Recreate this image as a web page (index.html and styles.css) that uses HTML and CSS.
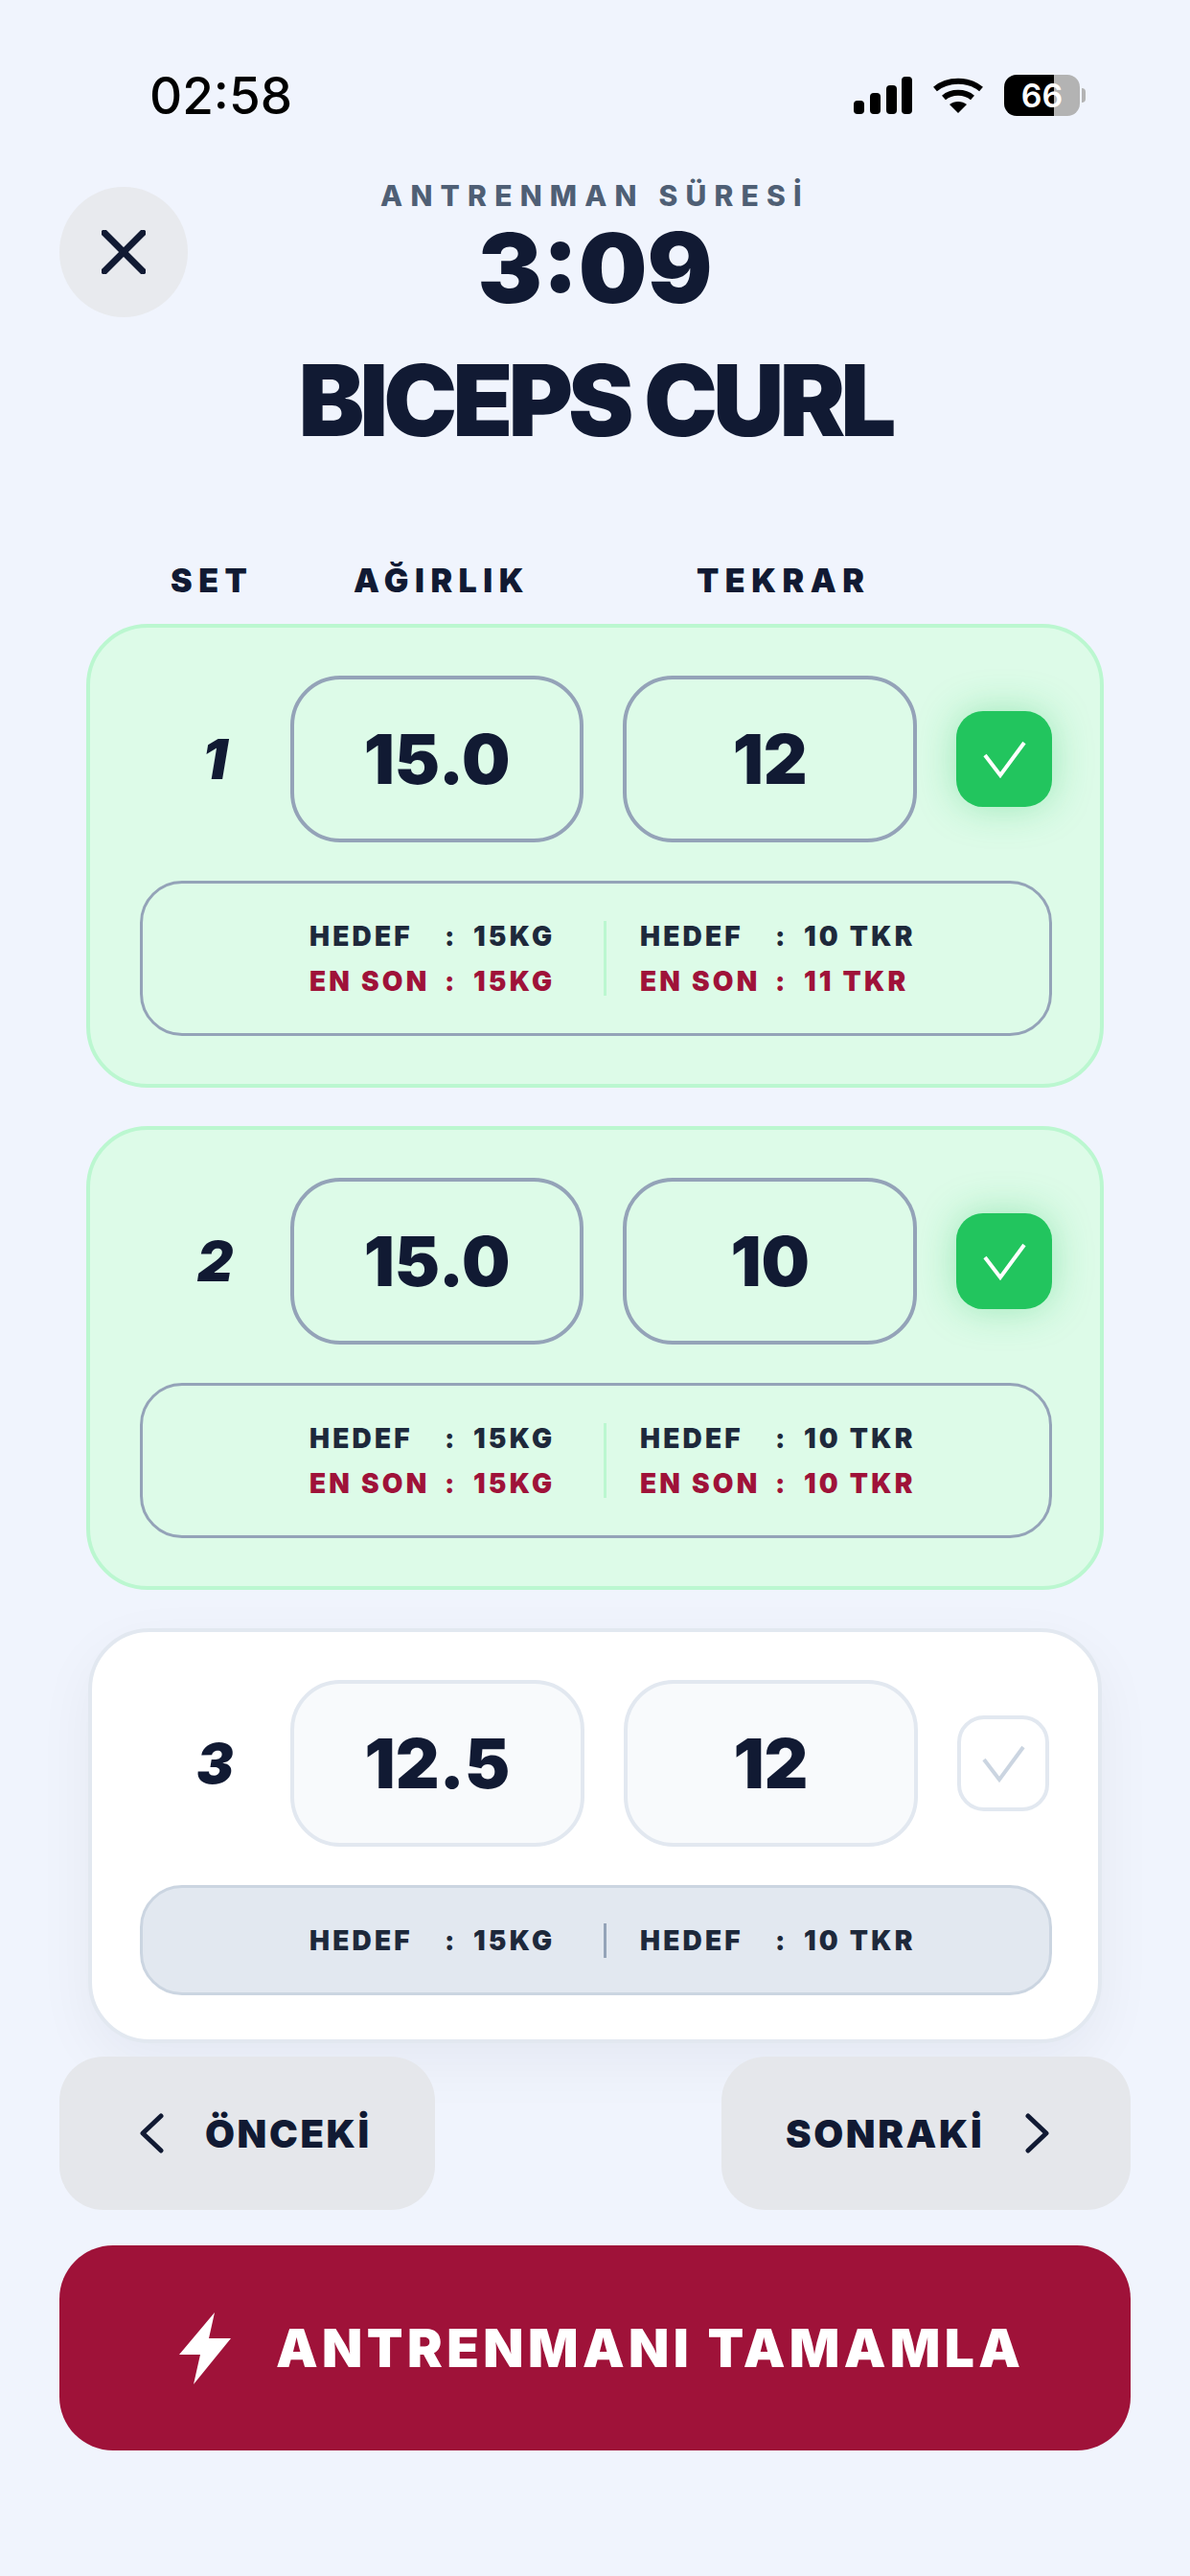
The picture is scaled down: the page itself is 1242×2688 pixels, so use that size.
FILE: index.html

```html
<!DOCTYPE html>
<html lang="tr">
<head>
    <meta charset="UTF-8">
    <meta name="viewport" content="width=device-width, initial-scale=1.0">
    <title>Biceps Curl</title>
    <link rel="stylesheet" href="styles.css">
</head>
<body>
    <div class="screen">
        <div class="status-bar">
            <span class="clock">02:58</span>
            <div class="status-icons">
                <svg class="signal" width="61" height="39" viewBox="0 0 61 39" fill="#000">
                    <rect x="0" y="25" width="11" height="14" rx="4"/>
                    <rect x="17" y="17" width="11" height="22" rx="4"/>
                    <rect x="34" y="9" width="11" height="30" rx="4"/>
                    <rect x="50" y="0" width="11" height="39" rx="4"/>
                </svg>
                <svg class="wifi" width="52" height="38" viewBox="0 0 52 38" fill="none" stroke="#000" stroke-width="6">
                    <path d="M2 12 C15 1 37 1 50 12"/>
                    <path d="M11 21 C19 14 33 14 41 21"/>
                    <path d="M17 28 L26 37 L35 28 C30 24 22 24 17 28 Z" fill="#000" stroke="none"/>
                </svg>
                <div class="battery">66</div>
            </div>
        </div>

        <div class="timer-row">
            <button class="close-btn">
                <svg width="46" height="46" viewBox="0 0 46 46" fill="none" stroke="#111a33" stroke-width="7" stroke-linecap="round">
                    <path d="M3 3 L43 43"/>
                    <path d="M43 3 L3 43"/>
                </svg>
            </button>
            <div class="timer">
                <div class="timer-label">ANTRENMAN SÜRESİ</div>
                <div class="timer-value">3:09</div>
            </div>
        </div>

        <h1 class="exercise">BICEPS CURL</h1>

        <div class="columns">
            <span class="col-set">SET</span>
            <span class="col-weight">AĞIRLIK</span>
            <span class="col-reps">TEKRAR</span>
        </div>

        <div class="set-list">
            <div class="set-card done">
                <div class="set-row">
                    <span class="set-no">1</span>
                    <div class="value-box">15.0</div>
                    <div class="value-box">12</div>
                    <div class="check">
                        <svg width="100" height="100" viewBox="0 0 100 100" fill="none" stroke="#fff" stroke-width="4"><path d="M30 46 L46 67 L71 33"/></svg>
                    </div>
                </div>
                <div class="info-box">
                    <div class="info-group">
                        <span>HEDEF</span><span>:</span><span>15KG</span>
                        <span class="last">EN SON</span><span class="last">:</span><span class="last">15KG</span>
                    </div>
                    <div class="info-divider"></div>
                    <div class="info-group">
                        <span>HEDEF</span><span>:</span><span>10 TKR</span>
                        <span class="last">EN SON</span><span class="last">:</span><span class="last">11 TKR</span>
                    </div>
                </div>
            </div>

            <div class="set-card done">
                <div class="set-row">
                    <span class="set-no">2</span>
                    <div class="value-box">15.0</div>
                    <div class="value-box">10</div>
                    <div class="check">
                        <svg width="100" height="100" viewBox="0 0 100 100" fill="none" stroke="#fff" stroke-width="4"><path d="M30 46 L46 67 L71 33"/></svg>
                    </div>
                </div>
                <div class="info-box">
                    <div class="info-group">
                        <span>HEDEF</span><span>:</span><span>15KG</span>
                        <span class="last">EN SON</span><span class="last">:</span><span class="last">15KG</span>
                    </div>
                    <div class="info-divider"></div>
                    <div class="info-group">
                        <span>HEDEF</span><span>:</span><span>10 TKR</span>
                        <span class="last">EN SON</span><span class="last">:</span><span class="last">10 TKR</span>
                    </div>
                </div>
            </div>

            <div class="set-card pending">
                <div class="set-row">
                    <span class="set-no">3</span>
                    <div class="value-box">12.5</div>
                    <div class="value-box">12</div>
                    <div class="check">
                        <svg width="96" height="96" viewBox="0 0 96 96" fill="none" stroke="#cbd5e1" stroke-width="4"><path d="M28 44 L44 65 L69 31"/></svg>
                    </div>
                </div>
                <div class="info-box">
                    <div class="info-group">
                        <span>HEDEF</span><span>:</span><span>15KG</span>
                    </div>
                    <div class="info-divider"></div>
                    <div class="info-group">
                        <span>HEDEF</span><span>:</span><span>10 TKR</span>
                    </div>
                </div>
            </div>
        </div>

        <div class="nav-row">
            <button class="nav-btn prev">
                <svg width="26" height="42" viewBox="0 0 26 42" fill="none" stroke="#111a33" stroke-width="5" stroke-linecap="round" stroke-linejoin="round"><path d="M23 3 L4 21 L23 39"/></svg>
                ÖNCEKİ
            </button>
            <button class="nav-btn next">
                SONRAKİ
                <svg width="26" height="42" viewBox="0 0 26 42" fill="none" stroke="#111a33" stroke-width="5" stroke-linecap="round" stroke-linejoin="round"><path d="M3 3 L22 21 L3 39"/></svg>
            </button>
        </div>

        <button class="finish-btn">
            <svg width="54" height="75" viewBox="0 0 54 75" fill="#fff"><path d="M37 0 L0 44 L22 44 L15 75 L54 27 L31 27 Z"/></svg>
            ANTRENMANI TAMAMLA
        </button>
    </div>
</body>
</html>
```

FILE: styles.css

```css
body {
    margin: 0;
    background-color: #f0f4fd;
    font-family: Inter, "Liberation Sans", sans-serif;
    color: #111a33;
}
button {
    font-family: inherit;
    border: none;
    color: inherit;
    padding: 0;
}
.screen {
    width: 1242px;
    height: 2688px;
    box-sizing: border-box;
    padding: 0 62px;
}

/* status bar */
.status-bar {
    height: 195px;
    box-sizing: border-box;
    padding: 70px 0 0 94px;
    display: flex;
    justify-content: space-between;
    align-items: flex-start;
}
.clock {
    font-size: 53px;
    font-weight: 500;
    line-height: 60px;
    color: #000;
}
.status-icons {
    display: flex;
    align-items: center;
    gap: 22px;
    padding: 8px 53px 0 0;
}
.battery {
    width: 79px;
    height: 43px;
    border-radius: 13px;
    background: linear-gradient(90deg, #000 66%, #b3b3b3 66%);
    color: #fff;
    font-size: 34px;
    font-weight: 600;
    line-height: 43px;
    text-align: center;
    position: relative;
}
.battery::after {
    content: "";
    position: absolute;
    left: 81px;
    top: 14px;
    width: 4px;
    height: 15px;
    border-radius: 0 4px 4px 0;
    background: #b3b3b3;
}

/* header */
.timer-row {
    display: grid;
    grid-template-columns: 134px 1fr 134px;
    height: 136px;
}
.close-btn {
    width: 134px;
    height: 136px;
    border-radius: 50%;
    background: #e8eaee;
    display: flex;
    align-items: center;
    justify-content: center;
}
.timer {
    text-align: center;
    margin-top: -8px;
}
.timer-label {
    font-size: 30px;
    font-weight: 800;
    letter-spacing: 8.2px;
    line-height: 34px;
    color: #4f5f75;
}
.timer-value {
    font-size: 101px;
    font-weight: 900;
    line-height: 102px;
    margin-top: 7px;
}
.exercise {
    margin: 28px 0 0;
    font-size: 103px;
    font-weight: 900;
    line-height: 118px;
    letter-spacing: -5px;
    text-align: center;
}
.columns {
    margin-top: 103px;
    height: 50px;
    display: flex;
    align-items: center;
    font-size: 34px;
    font-weight: 900;
    letter-spacing: 6.5px;
}
.col-set {
    width: 307px;
    padding-left: 116px;
    box-sizing: border-box;
}
.col-weight {
    width: 358px;
}
.col-reps {
    width: 200px;
}

/* set cards */
.set-list {
    margin-top: 21px;
    display: flex;
    flex-direction: column;
    gap: 40px;
}
.set-card {
    margin: 0 28px;
    box-sizing: border-box;
    border-radius: 64px;
    border: 4px solid #bbf7d0;
    padding: 50px 50px 50px 52px;
    background: #ddfbe8;
}
.set-row {
    display: flex;
    align-items: center;
}
.set-no {
    width: 157px;
    text-align: center;
    font-size: 58px;
    font-weight: 900;
    font-style: italic;
}
.value-box {
    width: 307px;
    height: 174px;
    box-sizing: border-box;
    border-radius: 52px;
    border: 4px solid #94a3b8;
    display: flex;
    align-items: center;
    justify-content: center;
    font-size: 71px;
    font-weight: 900;
    margin-right: 41px;
}
.check {
    width: 100px;
    height: 100px;
    box-sizing: border-box;
    border-radius: 28px;
    background: #22c55e;
    box-shadow: 0 0 40px rgba(34, 197, 94, 0.35);
    display: flex;
    align-items: center;
    justify-content: center;
}
.info-box {
    margin-top: 40px;
    height: 162px;
    box-sizing: border-box;
    border-radius: 44px;
    border: 3px solid #94a3b8;
    padding-left: 174px;
    display: flex;
    align-items: center;
}
.info-group {
    display: grid;
    grid-template-columns: 141px 30px auto;
    row-gap: 13px;
    font-size: 28px;
    font-weight: 900;
    line-height: 34px;
    letter-spacing: 3.2px;
    color: #1e293b;
}
.info-group:first-child {
    width: 307px;
}
.last {
    color: #9f1239;
}
.info-divider {
    width: 3px;
    height: 78px;
    background: #bbf7d0;
    margin-right: 35px;
}

/* set still to do */
.pending {
    margin: 0 30px;
    padding: 50px 48px 46px 50px;
    border-color: #e2e8f0;
    background: #fff;
    box-shadow: 0 20px 60px rgba(15, 23, 42, 0.05);
}
.pending .value-box {
    border-color: #e2e8f0;
    background: #f8fafc;
}
.pending .check {
    width: 96px;
    height: 100px;
    border: 4px solid #e2e8f0;
    background: #fff;
    box-shadow: none;
}
.pending .check svg {
    flex-shrink: 0;
}
.pending .info-box {
    height: 115px;
    background: #e2e8f0;
    border-color: #cbd5e1;
}
.pending .info-divider {
    height: 36px;
    background: #94a3b8;
}

/* bottom buttons */
.nav-row {
    margin-top: 14px;
    display: flex;
    justify-content: space-between;
}
.nav-btn {
    height: 160px;
    border-radius: 46px;
    background: #e5e7eb;
    display: flex;
    align-items: center;
    font-size: 40px;
    font-weight: 900;
    letter-spacing: 2.6px;
}
.prev {
    width: 392px;
    padding-left: 83px;
    gap: 43px;
}
.next {
    width: 427px;
    padding-left: 67px;
    gap: 43px;
}
.finish-btn {
    margin-top: 37px;
    width: 100%;
    height: 214px;
    border-radius: 56px;
    background: #9f1239;
    color: #fff;
    display: flex;
    align-items: center;
    padding-left: 125px;
    gap: 47px;
    font-size: 55px;
    font-weight: 900;
    letter-spacing: 4.4px;
}
```
